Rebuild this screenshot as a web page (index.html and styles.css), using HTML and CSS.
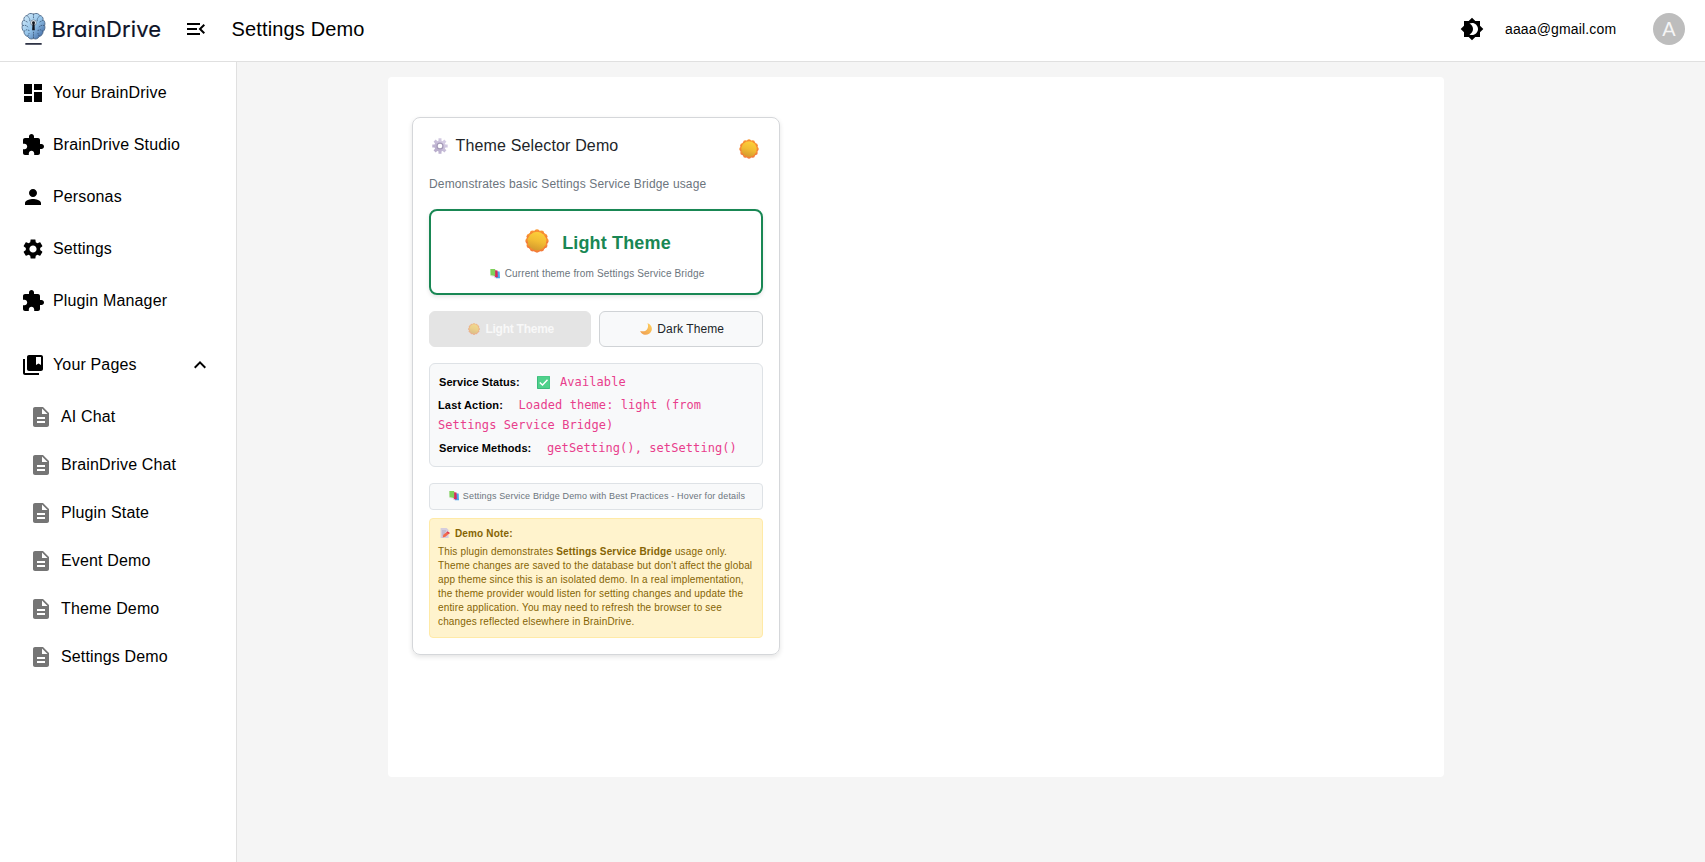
FILE: index.html
```html
<!DOCTYPE html>
<html lang="en">
<head>
<meta charset="utf-8">
<title>BrainDrive - Settings Demo</title>
<link rel="stylesheet" href="styles.css">
</head>
<body>
<svg class="defs" width="0" height="0" aria-hidden="true">
  <defs>
    <linearGradient id="gBrain" x1="0" y1="0" x2="1" y2="1"><stop offset="0" stop-color="#d9effc"/><stop offset=".5" stop-color="#96c5ea"/><stop offset="1" stop-color="#2f5796"/></linearGradient>
    <linearGradient id="gSun" x1=".65" y1="0" x2=".35" y2="1"><stop offset="0" stop-color="#fdd03a"/><stop offset=".5" stop-color="#f2bc33"/><stop offset="1" stop-color="#d3992e"/></linearGradient>
    <linearGradient id="gRay" x1="0" y1="0" x2="0" y2="1"><stop offset="0" stop-color="#fb9a2e"/><stop offset="1" stop-color="#f0743a"/></linearGradient>
    <linearGradient id="gMoon" x1="1" y1="0" x2="0" y2="1"><stop offset="0" stop-color="#ffd25e"/><stop offset="1" stop-color="#ee9a50"/></linearGradient>
    <linearGradient id="gGear" x1="1" y1="0" x2="0" y2="1"><stop offset="0" stop-color="#ddd5ea"/><stop offset="1" stop-color="#b1a5c6"/></linearGradient>
    <symbol id="sun" viewBox="0 0 24 24">
      <g fill="url(#gRay)"><circle cx="12" cy="12" r="10.800"/><circle cx="21.300" cy="12" r="2.400"/><circle cx="20.050" cy="16.650" r="2.400"/><circle cx="16.650" cy="20.050" r="2.400"/><circle cx="12" cy="21.300" r="2.400"/><circle cx="7.350" cy="20.050" r="2.400"/><circle cx="3.950" cy="16.650" r="2.400"/><circle cx="2.700" cy="12" r="2.400"/><circle cx="3.950" cy="7.350" r="2.400"/><circle cx="7.350" cy="3.950" r="2.400"/><circle cx="12" cy="2.700" r="2.400"/><circle cx="16.650" cy="3.950" r="2.400"/><circle cx="20.050" cy="7.350" r="2.400"/></g>
      <circle cx="12" cy="12" r="9.300" fill="url(#gSun)"/>
    </symbol>
    <symbol id="books" viewBox="0 0 12 12">
      <path d="M6 2.600l5.600.4.4 8H7z" fill="#4aa8ee"/><path d="M4 1.300l5 .4.4 8.300H5.200z" fill="#d8265e"/><path d="M.4 0h5.800v8.400L.6 7.800z" fill="#7fd05b"/><path d="M.6 7.800l4.600.6 1.500 1.800L2.200 9.400z" fill="#f1e8f4"/>
    </symbol>
    <symbol id="extension" viewBox="0 0 24 24"><path d="M20.500 11H19V7c0-1.100-.9-2-2-2h-4V3.500C13 2.120 11.880 1 10.500 1S8 2.120 8 3.500V5H4c-1.100 0-1.990.9-1.990 2v3.800H3.500c1.490 0 2.700 1.210 2.700 2.700s-1.210 2.700-2.700 2.700H2V20c0 1.100.9 2 2 2h3.800v-1.500c0-1.490 1.210-2.700 2.700-2.700 1.490 0 2.700 1.210 2.700 2.700V22H17c1.100 0 2-.9 2-2v-4h1.500c1.380 0 2.500-1.120 2.500-2.500S21.880 11 20.500 11z"/></symbol>
    <symbol id="doc" viewBox="0 0 24 24"><path d="M14 2H6c-1.100 0-1.990.9-1.990 2L4 20c0 1.100.890 2 1.990 2H18c1.100 0 2-.9 2-2V8l-6-6zm2 16H8v-2h8v2zm0-4H8v-2h8v2zm-3-5V3.500L18.500 9H13z"/></symbol>
  </defs>
</svg>
<div class="app">
  <header class="topbar">
    <div class="brand">
      <svg class="brand-mark" viewBox="0 0 26 34">
        <path d="M12.300 1.300C10 .2 7.500 1 6.500 2.900 4 3.200 2.700 5.400 3 7.400 1 9 .8 11.500 1.400 13.300.6 15.800 1.400 18.300 3 19.500c0 2.700 1.800 4.800 4 5.300 1.300 2.400 3.800 3.100 5.500 2.200h1c1.700.9 4.200.2 5.500-2.200 2.200-.5 4-2.600 4-5.300 1.600-1.200 2.400-3.700 1.600-6.200.6-1.800.4-4.300-1.600-5.900.3-2-1-4.200-3.500-4.500-1-1.900-3.500-2.700-5.800-1.600z" fill="url(#gBrain)" stroke="#4b6685" stroke-width=".9"/>
        <path d="M13 1.500v5M13 20v7M6.500 3l2.600 3.500v3M3.200 8l3.800 2M1.600 13.300h4l2 2.500M3 19.500l3-1.800 3 1M7 24.500l1.500-3.200M19.500 3l-2.600 3.500v3M22.800 8L19 10M24.400 13.300h-4l-2 2.500M23 19.500l-3-1.800-3 1M19 24.500l-1.500-3.200" fill="none" stroke="#35506f" stroke-width=".8" stroke-dasharray="1.600 .8"/>
        <circle cx="13" cy="10.500" r="3" fill="#e8f1f8" stroke="#49596b" stroke-width=".6"/>
        <circle cx="13" cy="10.500" r="1.500" fill="#10141d"/><path d="M12 11h2l.4 7.200h-2.800z" fill="#10141d"/>
        <path d="M4.500 32.500H21.500" stroke="#0d1328" stroke-width="1.600"/>
      </svg>
      <span class="brand-name">BrainDrive</span>
    </div>
    <svg class="icon menu-icon" viewBox="0 0 24 24"><path d="M3 18h13v-2H3v2zM3 13h10v-2H3v2zm0-7v2h13V6H3zm18 9.590L17.420 12 21 8.410 19.590 7l-5 5 5 5L21 15.590z"/></svg>
    <h1 class="page-title">Settings Demo</h1>
    <div class="account">
      <svg class="icon" viewBox="0 0 24 24"><path d="M20 8.690V4h-4.690L12 .69 8.690 4H4v4.690L.69 12 4 15.310V20h4.690L12 23.310 15.310 20H20v-4.690L23.310 12 20 8.690zM12 18c-.89 0-1.740-.2-2.500-.55C11.560 16.500 13 14.420 13 12s-1.440-4.500-3.500-5.450C10.260 6.200 11.110 6 12 6c3.310 0 6 2.690 6 6s-2.690 6-6 6z"/></svg>
      <span class="email">aaaa@gmail.com</span>
      <span class="avatar">A</span>
    </div>
  </header>
  <div class="body">
    <nav class="sidebar">
      <a class="nav-item"><svg class="icon" viewBox="0 0 24 24"><path d="M3 13h8V3H3v10zm0 8h8v-6H3v6zm10 0h8V11h-8v10zm0-18v6h8V3h-8z"/></svg><span>Your BrainDrive</span></a>
      <a class="nav-item"><svg class="icon"><use href="#extension"/></svg><span>BrainDrive Studio</span></a>
      <a class="nav-item"><svg class="icon" viewBox="0 0 24 24"><path d="M12 12c2.210 0 4-1.790 4-4s-1.790-4-4-4-4 1.790-4 4 1.790 4 4 4zm0 2c-2.670 0-8 1.340-8 4v2h16v-2c0-2.660-5.330-4-8-4z"/></svg><span>Personas</span></a>
      <a class="nav-item"><svg class="icon" viewBox="0 0 24 24"><path d="M19.140 12.940c.04-.3.06-.61.06-.94 0-.32-.02-.64-.07-.94l2.030-1.580c.18-.14.23-.41.12-.61l-1.920-3.320c-.12-.22-.37-.29-.59-.22l-2.390.96c-.5-.38-1.030-.7-1.620-.94l-.36-2.540c-.04-.24-.24-.41-.48-.41h-3.840c-.24 0-.43.17-.47.41l-.36 2.540c-.59.24-1.130.57-1.620.94l-2.390-.96c-.22-.08-.47 0-.59.22L2.740 8.870c-.12.21-.08.47.12.61l2.030 1.580c-.05.3-.09.63-.09.94s.02.64.07.94l-2.030 1.580c-.18.14-.23.41-.12.61l1.920 3.320c.12.22.37.29.59.22l2.390-.96c.5.38 1.030.7 1.620.94l.36 2.540c.05.24.24.41.48.41h3.840c.24 0 .44-.17.47-.41l.36-2.540c.59-.24 1.130-.56 1.620-.94l2.390.96c.22.08.47 0 .59-.22l1.920-3.320c.12-.22.07-.47-.12-.61l-2.010-1.580zM12 15.600c-1.980 0-3.600-1.620-3.600-3.600s1.620-3.600 3.600-3.600 3.600 1.620 3.600 3.600-1.620 3.600-3.600 3.600z"/></svg><span>Settings</span></a>
      <a class="nav-item"><svg class="icon"><use href="#extension"/></svg><span>Plugin Manager</span></a>
      <a class="nav-item pages-head"><svg class="icon" viewBox="0 0 24 24"><path d="M4 6H2v14c0 1.100.9 2 2 2h14v-2H4V6z"/><path d="M20 2H8c-1.100 0-2 .9-2 2v12c0 1.100.9 2 2 2h12c1.100 0 2-.9 2-2V4c0-1.100-.9-2-2-2zm0 10l-2.500-1.500L15 12V4h5v8z"/></svg><span>Your Pages</span><svg class="icon chevron" viewBox="0 0 24 24"><path d="M12 8l-6 6 1.410 1.410L12 10.830l4.590 4.580L18 14z"/></svg></a>
      <div class="sub-list">
        <a class="sub-item"><svg class="icon"><use href="#doc"/></svg><span>AI Chat</span></a>
        <a class="sub-item"><svg class="icon"><use href="#doc"/></svg><span>BrainDrive Chat</span></a>
        <a class="sub-item"><svg class="icon"><use href="#doc"/></svg><span>Plugin State</span></a>
        <a class="sub-item"><svg class="icon"><use href="#doc"/></svg><span>Event Demo</span></a>
        <a class="sub-item"><svg class="icon"><use href="#doc"/></svg><span>Theme Demo</span></a>
        <a class="sub-item"><svg class="icon"><use href="#doc"/></svg><span>Settings Demo</span></a>
      </div>
    </nav>
    <main class="content">
      <div class="canvas">
        <section class="card">
          <div class="card-head">
            <svg class="gear" viewBox="0 0 16 16"><g stroke="url(#gGear)" stroke-width="3"><path d="M8 .3V15.700M.3 8.010H15.700M2.600 2.600L13.400 13.400M13.400 2.600L2.600 13.400"/></g><circle cx="8" cy="8" r="5.600" fill="url(#gGear)"/><circle cx="8" cy="8" r="3.500" fill="#a398b6"/><circle cx="8" cy="8" r="2.300" fill="#fff"/></svg>
            <h2>Theme Selector Demo</h2>
            <svg class="head-sun"><use href="#sun"/></svg>
          </div>
          <p class="desc">Demonstrates basic Settings Service Bridge usage</p>
          <div class="current">
            <div class="current-name"><svg class="big-sun"><use href="#sun"/></svg><span>Light Theme</span></div>
            <div class="current-src"><svg class="books"><use href="#books"/></svg><span>Current theme from Settings Service Bridge</span></div>
          </div>
          <div class="buttons">
            <button class="btn btn-off"><svg class="btn-icon"><use href="#sun"/></svg><span>Light Theme</span></button>
            <button class="btn"><svg class="btn-icon" viewBox="0 0 12 12"><path d="M7.400.2c3.600 1 5.300 4.500 4.100 7.600-1.300 3.500-5 4.800-8 3.600C1.700 10.700.6 9.400.2 7.900c3.100 1.200 6.200 0 7.300-2.500.8-1.700.7-3.500-.1-5.200z" fill="url(#gMoon)"/></svg><span>Dark Theme</span></button>
          </div>
          <div class="status">
            <div class="row"><b class="label-status">Service Status:</b><svg class="check" viewBox="0 0 13 13"><rect width="13" height="13" rx=".8" fill="#35b578"/><rect x=".8" y=".3" width="11.900" height="11.900" rx=".6" fill="#4fd18b"/><path d="M2.800 6.500l2.700 2.600 5-5.300" fill="none" stroke="#fff" stroke-width="1.400"/></svg><code>Available</code></div>
            <div class="row-wrap"><b class="label-action">Last Action:</b><code>Loaded theme: light (from<br>Settings Service Bridge)</code></div>
            <div class="row"><b class="label-methods">Service Methods:</b><code>getSetting(), setSetting()</code></div>
          </div>
          <div class="hint"><svg class="books"><use href="#books"/></svg><span>Settings Service Bridge Demo with Best Practices - Hover for details</span></div>
          <div class="note">
            <div class="note-head"><svg class="memo" viewBox="0 0 10 10"><path d="M.6 0h6l2 2v8h-8z" fill="#d5cddd"/><path d="M2 3h4M2 5h3M2 7h2" stroke="#a89fb6" stroke-width=".7"/><path d="M2.600 9.400l.8-2.600 4-3.400L9.800 5 5.400 8.800z" fill="#f4694a"/><path d="M7.400 3.400L9.800 5l-.9.8-2.400-1.600z" fill="#dc3159"/></svg><b>Demo Note:</b></div>
            <p>This plugin demonstrates <b>Settings Service Bridge</b> usage only.<br>Theme changes are saved to the database but don't affect the global<br>app theme since this is an isolated demo. In a real implementation,<br>the theme provider would listen for setting changes and update the<br>entire application. You may need to refresh the browser to see<br>changes reflected elsewhere in BrainDrive.</p>
          </div>
        </section>
      </div>
    </main>
  </div>
</div>
</body>
</html>
```

FILE: styles.css
```css
* { box-sizing: border-box; }
body { margin: 0; font-family: "Liberation Sans", Arial, sans-serif; font-size: 16px; letter-spacing: .15px; color: #000; background: #fff; }
h1, h2, p { margin: 0; font-weight: 400; }
svg { display: block; flex: none; }
.defs { position: absolute; }
.app { height: 862px; display: flex; flex-direction: column; overflow: hidden; }
.icon { width: 24px; height: 24px; fill: currentColor; }
span, code, b { white-space: nowrap; }

.topbar { height: 62px; flex: none; display: flex; align-items: center; border-bottom: 1px solid #e0e0e0; padding: 0 20px 3px; }
.brand { display: flex; align-items: center; width: 164px; padding-left: 1px; }
.brand-mark { width: 25px; height: 34px; }
.brand-name { font-family: Inter, sans-serif; font-feature-settings: "cv11"; font-size: 22px; color: #0d1328; margin-left: 5.5px; letter-spacing: .1px; -webkit-text-stroke: .2px #0d1328; }
.page-title { font-size: 20px; line-height: 24px; margin-left: 23.5px; }
.account { margin-left: auto; display: flex; align-items: center; }
.email { font-size: 14px; margin-left: 21px; width: 148px; }
.avatar { width: 32px; height: 32px; border-radius: 50%; background: #bdbdbd; color: #f5f5f5; font-size: 20px; display: flex; align-items: center; justify-content: center; }

.body { flex: 1; display: flex; min-height: 0; }
.sidebar { width: 237px; flex: none; border-right: 1px solid #e0e0e0; padding-top: 5px; }
.nav-item { display: flex; align-items: center; height: 52px; padding: 0 24px 0 21px; gap: 8px; }
.pages-head { margin-top: 12px; }
.chevron { margin-left: auto; }
.sub-list { padding-top: 2px; }
.sub-item { display: flex; align-items: center; height: 48px; padding-left: 29px; gap: 8px; }
.sub-item .icon { color: #757575; }

.content { flex: 1; background: #f5f5f5; padding: 15px 0 0 151px; }
.canvas { width: 1056px; height: 700px; background: #fff; border-radius: 4px; padding: 40px 24px; }
.card { width: 368px; height: 538px; border: 1px solid #d5d7da; border-radius: 8px; padding: 16px; box-shadow: 0 2px 5px rgba(0,0,0,.11); }
.card-head { display: flex; align-items: center; height: 24px; padding: 0 4px 0 3px; }
.card-head h2 { font-size: 16px; color: #212529; margin-left: 7.5px; }
.gear { width: 16px; height: 16px; }
.head-sun { width: 20px; height: 20px; margin: 6px 0 0 auto; }
.desc { font-size: 12px; line-height: 18px; color: #6c757d; margin-top: 17px; }
.current { height: 86px; margin-top: 16px; border: 2px solid #198754; border-radius: 8px; box-shadow: 0 2px 4px rgba(0,0,0,.1); padding-top: 18px; }
.current-name { display: flex; justify-content: center; align-items: center; gap: 13px; height: 26px; font-size: 18px; font-weight: 700; color: #198754; padding-left: 4px; }
.big-sun { width: 24px; height: 24px; margin-bottom: 2px; }
.current-name span { padding-top: 2px; }
.current-src { display: flex; justify-content: center; align-items: center; gap: 5px; margin-top: 12px; padding-left: 2px; font-size: 10px; line-height: 14px; color: #6c757d; }
.books { width: 10px; height: 10px; }
.buttons { display: flex; gap: 8px; margin-top: 16px; }
.btn { width: 164px; height: 36px; border: 1px solid #d0d3d6; border-radius: 6px; background: #f8f9fa; font: 12px "Liberation Sans", Arial, sans-serif; letter-spacing: .1px; color: #212529; display: flex; align-items: center; justify-content: center; gap: 5.5px; padding: 0 0 0 2px; }
.btn-off { width: 162px; background: #e4e4e4; border-color: #e4e4e4; color: #f8f8f8; font-weight: 700; letter-spacing: -.25px; }
.btn-icon { width: 12px; height: 12px; }
.btn-off .btn-icon { opacity: .5; }
.status { height: 104px; margin-top: 16px; border: 1px solid #dee2e6; border-radius: 6px; background: #f8f9fa; padding: 8px 8px 0; font-size: 11px; }
.row { display: flex; align-items: center; height: 20px; }
.row b { padding-left: 1px; letter-spacing: .08px; }
.row-wrap { height: 46px; line-height: 20px; padding-top: 3px; white-space: nowrap; }
.status code { font: 12px/20px "DejaVu Sans Mono", monospace; letter-spacing: .08px; color: #e83e8c; }
.label-status { width: 99px; }
.label-action { display: inline-block; width: 80.5px; }
.label-methods { width: 109px; }
.check { width: 13px; height: 13px; margin-right: 10px; }
.hint { height: 27px; margin-top: 16px; border: 1px solid #dee2e6; border-radius: 4px; background: #f8f9fa; display: flex; align-items: center; justify-content: center; gap: 4px; font-size: 9px; color: #6c757d; padding: 0 0 2px 2px; }
.note { height: 120px; margin-top: 8px; border: 1px solid #ffeaa7; border-radius: 4px; background: #fff3cd; padding: 7px 8px; color: #856404; font-size: 10px; }
.note-head { display: flex; align-items: center; gap: 5px; height: 14px; padding-left: 2px; }
.memo { width: 10px; height: 10px; }
.note p { margin-top: 5px; line-height: 14px; white-space: nowrap; }
```
